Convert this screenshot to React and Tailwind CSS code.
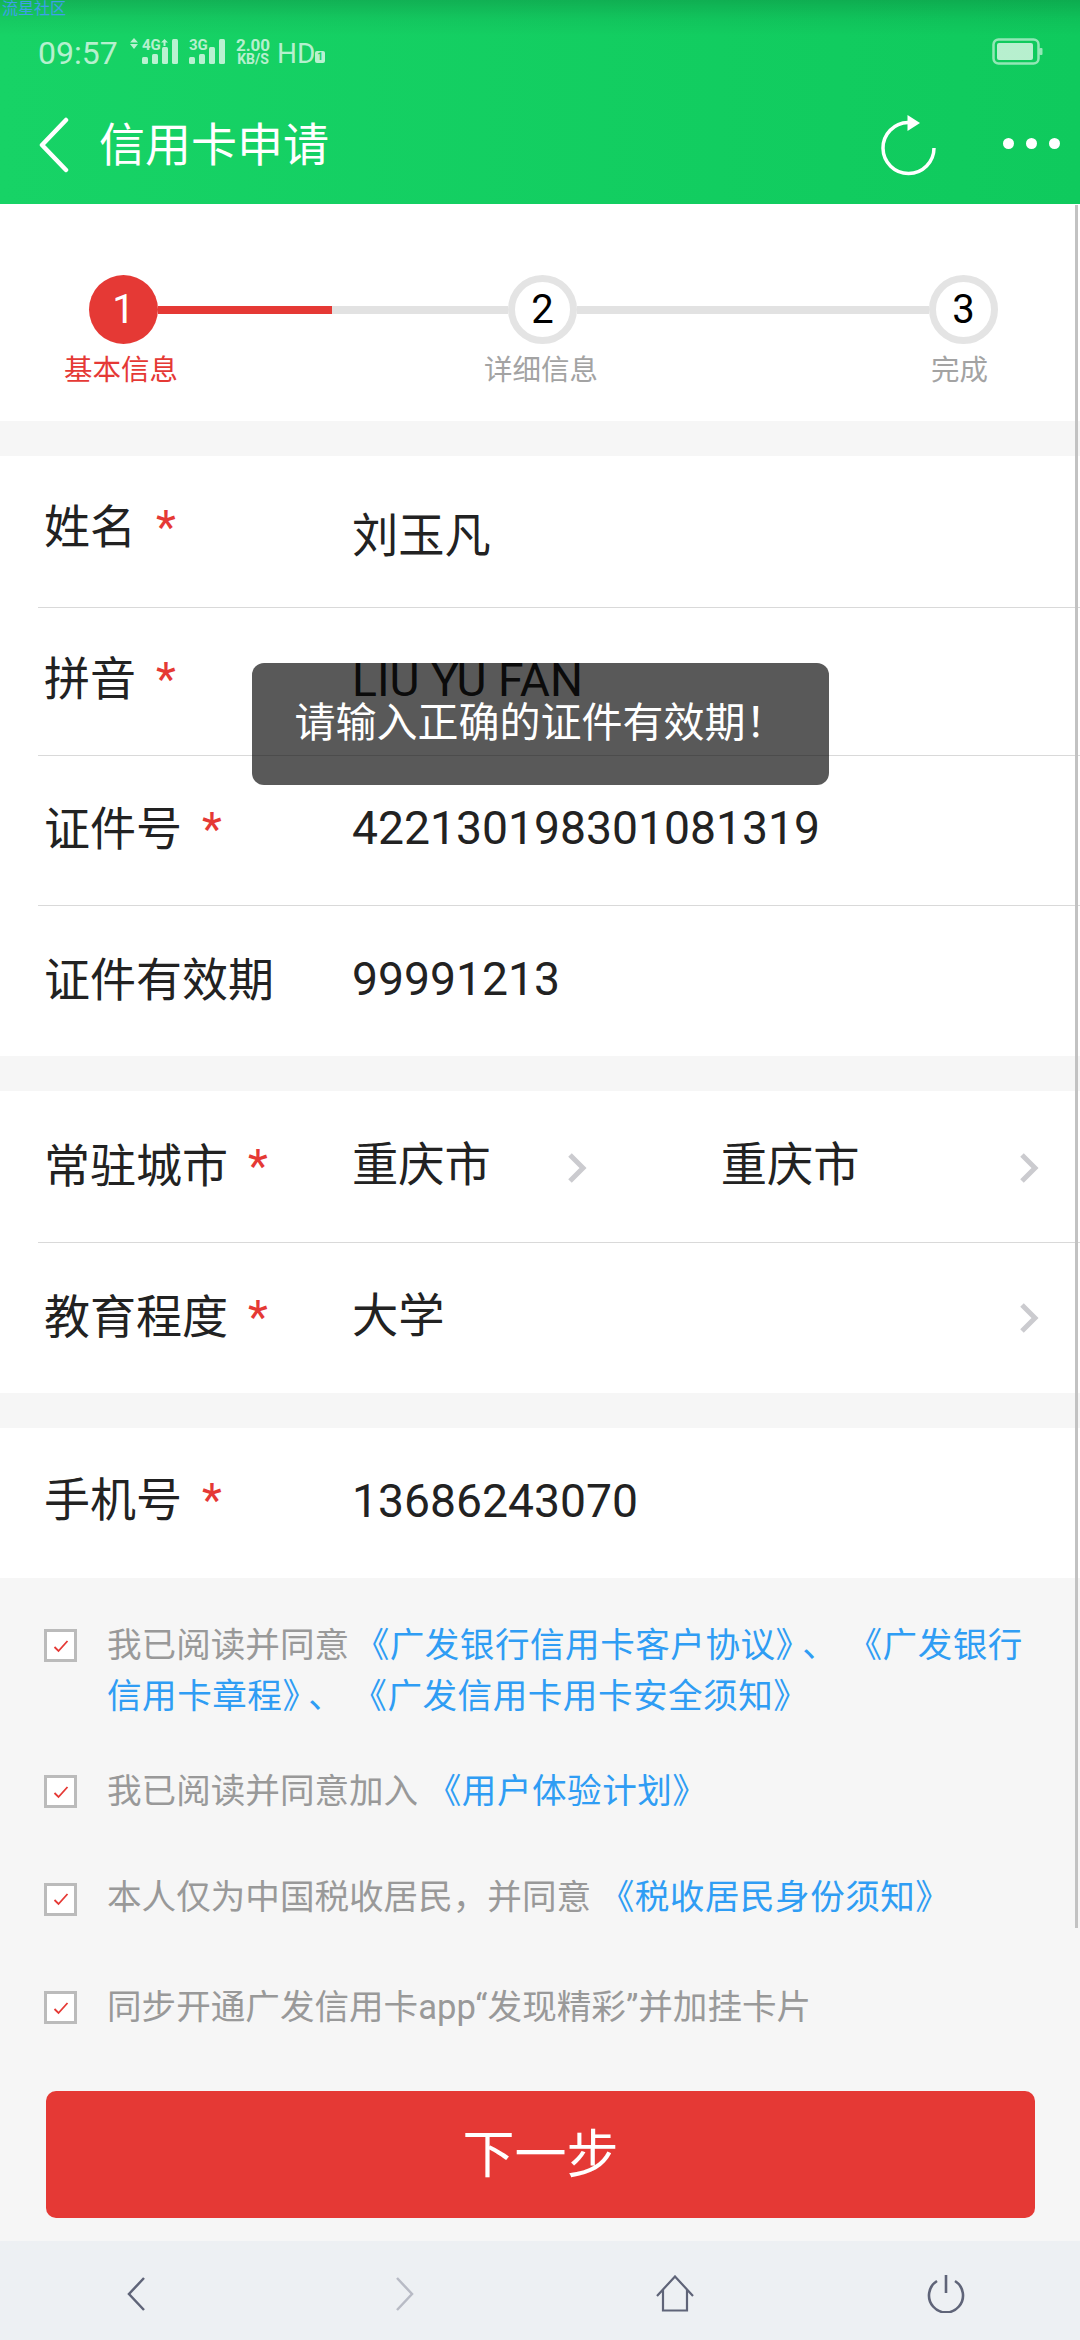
const font = { fontFamily: '"Roboto","Noto Sans CJK SC","Noto Sans",sans-serif' };

function Chevron({ className }) {
  return (
    <svg width="20" height="32" viewBox="0 0 20 32" className={className}>
      <path d="M3 3 L16 16 L3 29" fill="none" stroke="#cbcbcf" strokeWidth="5" />
    </svg>
  );
}

function Star() {
  return <span className="text-[#e53935] ml-[20px] font-normal">*</span>;
}

function Check() {
  return (
    <span className="w-[33px] h-[33px] shrink-0 border-[3px] border-[#bbbbbb] bg-white flex items-center justify-center">
      <svg width="16" height="14" viewBox="0 0 16 14">
        <path d="M1.5 8 L5.5 12 L14.5 2" fill="none" stroke="#e53935" strokeWidth="1.8" />
      </svg>
    </span>
  );
}

function Step({ n, active }) {
  return (
    <div
      className={
        active
          ? "w-[69px] h-[69px] shrink-0 rounded-full bg-[#e53935] text-white flex items-center justify-center text-[40px]"
          : "w-[69px] h-[69px] shrink-0 rounded-full bg-white border-[7px] border-[#e4e4e4] text-black flex items-center justify-center text-[40px]"
      }
    >
      {n}
    </div>
  );
}

function Row({ h = "h-[150px]", label, star, value, border = true, labelClass = "", valueClass = "", children }) {
  return (
    <div className={h + " ml-[38px] flex items-center " + (border ? "border-b border-[#d9d9d9]" : "")}>
      <div className={"w-[314px] pl-[6px] text-[46px] text-[#222] leading-[60px] whitespace-nowrap " + labelClass}>
        {label}
        {star && <Star />}
      </div>
      {children || <div className={"text-[46.25px] text-[#222] leading-[60px] whitespace-nowrap " + valueClass}>{value}</div>}
    </div>
  );
}

function Signal({ tech, plus }) {
  return (
    <div className="relative w-[36px] h-[25px]">
      <div className="flex items-end gap-[4.3px] h-[25px]">
        {[7, 10, 17, 25].map((h, i) => (
          <span key={i} className="w-[6px] bg-white/70 rounded-[1.5px]" style={{ height: h }} />
        ))}
      </div>
      <span className="absolute left-0 top-0 text-[15px] leading-[12px] font-bold text-white/70">{tech}</span>
      {plus && (
        <svg width="7" height="7" viewBox="0 0 7 7" className="absolute left-[19px] top-[0px]">
          <path d="M3.5 0 L7 3.5 H0 Z M2.5 3.5 H4.5 V7 H2.5 Z" fill="rgba(255,255,255,.7)" />
        </svg>
      )}
    </div>
  );
}

export default function App() {
  return (
    <div style={font} className="w-[1080px] h-[2340px] bg-[#f6f6f6] relative overflow-hidden flex flex-col">
      {/* header */}
      <div className="h-[204px] shrink-0 bg-gradient-to-r from-[#17d366] to-[#0fca5d] relative">
        <div className="absolute inset-x-0 top-0 h-[36px] bg-gradient-to-b from-black/15 via-black/5 to-transparent" />
        <div className="absolute left-[2px] top-0 text-[16px] leading-[18px] text-[#3f9fe8]">流星社区</div>
        <div className="h-[71px] pl-[38px] pr-[37px] flex items-end justify-between relative">
          <div className="flex items-end">
            <span className="text-[32px] leading-[36px] text-white/70 w-[92px]">09:57</span>
            <svg width="8" height="11" viewBox="0 0 8 11" className="mb-[22px] mr-[4px]">
              <path d="M4 0 L8 4.5 H0 Z M0 6 H8 L4 11 Z" fill="rgba(255,255,255,.7)" />
            </svg>
            <div className="mb-[7px] mr-[11px]"><Signal tech="4G" plus /></div>
            <div className="mb-[7px] mr-[11px]"><Signal tech="3G" /></div>
            <div className="flex flex-col items-center font-bold text-white/70 w-[34px] mr-[7px] mb-[7px]">
              <span className="text-[17px] leading-[15px]">2.00</span>
              <span className="text-[14px] leading-[10px] mt-[1px]">KB/S</span>
            </div>
            <span className="text-[28px] leading-[34px] text-white/70 w-[38px]">HD</span>
            <span className="w-[10px] h-[12px] mb-[8px] rounded-[2px] bg-white/70 text-[10px] leading-[12px] text-center font-bold text-[#17d366]">1</span>
          </div>
          <svg width="51" height="27" viewBox="0 0 51 27" className="mb-[6px]">
            <rect x="1.5" y="1.5" width="45" height="24" rx="5" fill="none" stroke="rgba(255,255,255,.55)" strokeWidth="2.5" />
            <rect x="5" y="5" width="36" height="17" rx="2" fill="rgba(255,255,255,.7)" />
            <rect x="47.5" y="10" width="3" height="7" rx="1" fill="rgba(255,255,255,.55)" />
          </svg>
        </div>
        <div className="h-[133px] flex items-center pl-[37px] pr-[20px] pt-[15px]">
          <svg width="32" height="56" viewBox="0 0 32 56" className="shrink-0">
            <path d="M29 3 L5 28 L29 53" fill="none" stroke="white" strokeWidth="4.5" strokeLinecap="round" strokeLinejoin="round" />
          </svg>
          <span className="ml-[30px] text-[46px] text-white whitespace-nowrap">信用卡申请</span>
          <svg width="55" height="61" viewBox="0 0 55 61" className="ml-auto mr-[67px]">
            <path d="M27 7.5 A25.5 25.5 0 1 0 53 33" fill="none" stroke="white" strokeWidth="3.5" />
            <path d="M26.5 0 L39 8 L26.5 16 Z" fill="white" />
          </svg>
          <div className="flex gap-[12px] mb-[4px]">
            <span className="w-[11px] h-[11px] rounded-full bg-white" />
            <span className="w-[11px] h-[11px] rounded-full bg-white" />
            <span className="w-[11px] h-[11px] rounded-full bg-white" />
          </div>
        </div>
      </div>

      {/* stepper */}
      <div className="h-[217px] shrink-0 bg-white pt-[71px]">
        <div className="flex items-center pl-[89px] pr-[82px]">
          <Step n="1" active />
          <div className="h-[8px] w-[350px] flex bg-[#e2e2e2]"><div className="w-[174px] bg-[#e53935]" /></div>
          <Step n="2" />
          <div className="h-[8px] flex-1 bg-[#e2e2e2]" />
          <Step n="3" />
        </div>
        <div className="flex text-[28.5px] leading-[40px] mt-[7px] whitespace-nowrap">
          <span className="ml-[64px] text-[#e53935]">基本信息</span>
          <span className="ml-[306px] text-[#a3a3a3]">详细信息</span>
          <span className="ml-[333px] text-[#a3a3a3]">完成</span>
        </div>
      </div>

      {/* group 1 */}
      <div className="mt-[35px] bg-white shrink-0">
        <Row h="h-[152px]" label="姓名" star value="刘玉凡" labelClass="mb-[10px]" valueClass="mt-[8px]" />
        <Row h="h-[148px]" label="拼音" star value="LIU YU FAN" labelClass="mb-[6px]" valueClass="mb-[4px]" />
        <Row label="证件号" star value="422130198301081319" labelClass="mb-[3px]" valueClass="mb-[6px]" />
        <Row label="证件有效期" value="99991213" border={false} labelClass="mb-[3px]" valueClass="mb-[5px]" />
      </div>

      {/* group 2 */}
      <div className="mt-[35px] bg-white shrink-0">
        <Row h="h-[152px]" label="常驻城市" star labelClass="mb-[1px]">
          <div className="flex-1 flex items-center text-[46.25px] text-[#222] mb-[1px]">
            <span>重庆市</span>
            <Chevron className="ml-[76px] mt-[4px]" />
            <span className="ml-[134px]">重庆市</span>
            <Chevron className="ml-auto mr-[41px] mt-[4px]" />
          </div>
        </Row>
        <Row h="h-[150px]" label="教育程度" star border={false} labelClass="mb-[2px]">
          <div className="flex-1 flex items-center text-[46.25px] text-[#222] mb-[2px]">
            <span>大学</span>
            <Chevron className="ml-auto mr-[41px] mt-[2px]" />
          </div>
        </Row>
      </div>

      {/* group 3 */}
      <div className="mt-[35px] bg-white shrink-0">
        <Row label="手机号" star value="13686243070" border={false} labelClass="mb-[6px]" valueClass="mb-[4px]" />
      </div>

      {/* agreements */}
      <div className="pl-[44px] text-[34.6px] text-[#999999] leading-[51px] whitespace-nowrap">
        <div className="flex gap-[30px] items-start mt-[42px]">
          <span className="mt-[9px]"><Check /></span>
          <div>
            我已阅读并同意 <span className="text-[#2f9df4] tracking-[0.5px] ml-[-3px]">《广发银行信用卡客户协议》<span className="ml-[9px]">、</span> <span className="ml-[1px]">《广发银行</span><br />信用卡章程》<span className="ml-[8px]">、</span> 《广发信用卡用卡安全须知》</span>
          </div>
        </div>
        <div className="flex gap-[30px] items-center mt-[44px]">
          <Check />
          <div>我已阅读并同意加入 <span className="text-[#2f9df4] tracking-[0.5px]">《用户体验计划》</span></div>
        </div>
        <div className="flex gap-[30px] items-center mt-[55px]">
          <span className="mt-[3px]"><Check /></span>
          <div>本人仅为中国税收居民，并同意 <span className="text-[#2f9df4] tracking-[0.5px]">《税收居民身份须知》</span></div>
        </div>
        <div className="flex gap-[30px] items-center mt-[59px]">
          <Check />
          <div>同步开通广发信用卡app“发现精彩”并加挂卡片</div>
        </div>
      </div>

      {/* button */}
      <div className="mt-auto ml-[46px] mr-[45px] mb-[23px] h-[127px] shrink-0 rounded-[10px] bg-[#e53935] text-white text-[52px] pt-[3px] flex items-center justify-center">
        下一步
      </div>

      {/* nav */}
      <div className="h-[99px] shrink-0 bg-[#edf0f3] flex items-center pt-[6px] pl-[126px]">
        <svg width="20" height="34" viewBox="0 0 20 34"><path d="M18 1 L3 17 L18 33" fill="none" stroke="#5f6478" strokeWidth="2.5" /></svg>
        <svg width="20" height="34" viewBox="0 0 20 34" className="ml-[249px]"><path d="M2 1 L17 17 L2 33" fill="none" stroke="#b8bbc5" strokeWidth="2.5" /></svg>
        <svg width="38" height="37" viewBox="0 0 38 37" className="ml-[241px]">
          <path d="M1 21 L19 1.5 L37 21 M7 15 V35.5 H31 V15" fill="none" stroke="#5f6478" strokeWidth="2.2" />
        </svg>
        <svg width="38" height="38" viewBox="0 0 38 38" className="ml-[233px]">
          <path d="M10 6 A17 17 0 1 0 28 6" fill="none" stroke="#5f6478" strokeWidth="2.6" />
          <path d="M19 0 V18" stroke="#5f6478" strokeWidth="2.6" />
        </svg>
      </div>

      {/* scrollbar */}
      <div className="absolute right-[2px] top-[205px] w-[3px] h-[1723px] bg-[#c2c2c2]" />

      {/* toast */}
      <div className="absolute left-[252px] top-[663px] w-[577px] h-[122px] rounded-[12px] bg-black/65 flex items-center justify-center text-white text-[41px] whitespace-nowrap">
        请输入正确的证件有效期！
      </div>
    </div>
  );
}
